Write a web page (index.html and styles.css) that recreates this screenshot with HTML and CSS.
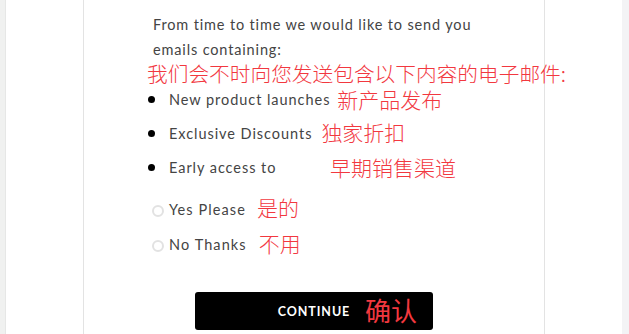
FILE: index.html
```html
<!DOCTYPE html>
<html lang="en">
<head>
<meta charset="utf-8">
<link rel="stylesheet" href="styles.css">
<title>Email preferences</title>
</head>
<body>
<div class="page">
  <div class="strip strip-left"></div>
  <div class="gutter gutter-left"></div>
  <main class="card">
    <p class="intro">From time to time we would like to send you<br>emails containing:</p>
    <p class="note note-head">我们会不时向您发送包含以下内容的电子邮件:</p>
    <ul class="list">
      <li class="item"><span class="dot"></span><span class="label">New product launches</span><span class="note note-a">新产品发布</span></li>
      <li class="item"><span class="dot"></span><span class="label">Exclusive Discounts</span><span class="note note-b">独家折扣</span></li>
      <li class="item"><span class="dot"></span><span class="label label-c">Early access to</span><span class="note note-c">早期销售渠道</span></li>
    </ul>
    <div class="choices">
      <label class="choice"><span class="radio"></span><span class="label">Yes Please</span><span class="note note-yes">是的</span></label>
      <label class="choice"><span class="radio"></span><span class="label">No Thanks</span><span class="note note-no">不用</span></label>
    </div>
    <div class="actions">
      <button class="btn" type="button">CONTINUE<span class="note note-btn">确认</span></button>
    </div>
  </main>
  <div class="gutter gutter-right"></div>
  <div class="strip strip-right"></div>
</div>
</body>
</html>
```
FILE: styles.css
```css
* { box-sizing: border-box; }
html, body { margin: 0; padding: 0; background: #fff; }
body { font-family: "Lato", "Noto Sans CJK SC", sans-serif; color: #3c3c3c; }

.page { display: flex; width: 629px; height: 334px; overflow: hidden; }
.strip-left { width: 6px; background: #f0f1f0; border-right: 1px solid #e6e7e6; flex: none; }
.gutter-left { width: 77px; flex: none; }
.card {
  width: 462px;
  flex: none;
  border-left: 1px solid #e3e3e3;
  border-right: 1px solid #e3e3e3;
  padding: 12px 0 0 63px;
  display: flex;
  flex-direction: column;
  position: relative;
  z-index: 1;
}
.gutter-right { width: 77px; flex: none; }
.strip-right { width: 7px; background: #f3f3f5; flex: none; }

.intro {
  margin: 0;
  padding-left: 6px;
  font-size: 14.5px;
  line-height: 25px;
  letter-spacing: 0.85px;
  color: #444;
}

.note {
  font-family: "Noto Sans CJK SC", sans-serif;
  color: #f2383f;
  font-size: 21px;
  line-height: 24px;
  font-weight: 300;
  letter-spacing: 0;
  white-space: nowrap;
}
.note-head { margin: 0; line-height: 20px; font-size: 20.7px; padding-top: 1px; }

.list { list-style: none; margin: -1px 0 0 0; padding: 0; }
.item { display: flex; align-items: center; height: 34px; font-size: 14.5px; letter-spacing: 0.95px; color: #444; }
.dot { width: 7px; height: 7px; border-radius: 50%; background: #000; margin: 0 14px 0 1px; flex: none; }
.item .note { margin-left: 7px; }
.item .note-b { position: relative; top: -1px; margin-left: 9px; }
.label-c { width: 153px; flex: none; }
.item .note-c { margin-left: 8px; }

.choices { display: flex; flex-direction: column; margin-top: 8px; }
.choice { display: flex; align-items: center; height: 35px; font-size: 14.5px; letter-spacing: 1.1px; color: #444; }
.radio { width: 12px; height: 12px; border: 2px solid #e2e2e2; border-radius: 50%; margin: 2px 5px 0 5px; flex: none; }
.note-yes { margin-left: 11px; position: relative; top: -3px; }
.note-no { margin-left: 12px; position: relative; top: -2px; }

.actions { display: flex; justify-content: flex-start; margin-top: 30px; padding-left: 48px; }
.btn {
  position: relative;
  width: 238px;
  height: 38px;
  background: #000;
  color: #fff;
  border: none;
  border-radius: 3px;
  font-family: "Lato", sans-serif;
  font-weight: 700;
  font-size: 12.5px;
  letter-spacing: 0.9px;
  padding: 0;
}
.note-btn { position: absolute; left: 170px; top: 1px; font-size: 26px; line-height: 34px; font-weight: 400; letter-spacing: 0; }
```
